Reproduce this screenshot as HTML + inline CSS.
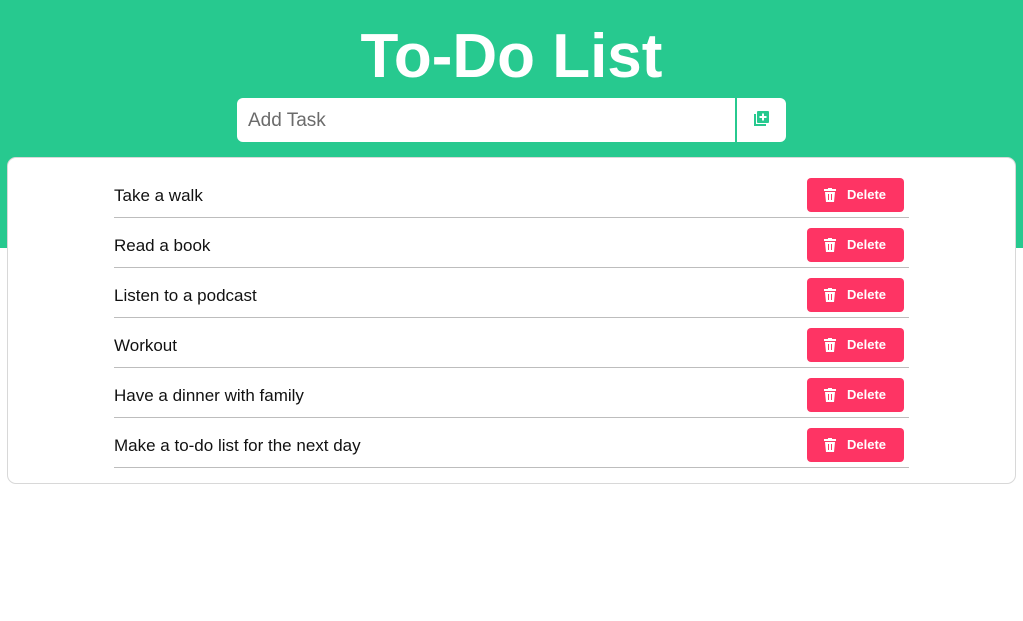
<!DOCTYPE html>
<html><head><style>
*{box-sizing:border-box;margin:0;padding:0}
body{width:1023px;height:621px;background:#fff;font-family:"Liberation Sans",sans-serif;position:relative;overflow:hidden}
.hdr{position:absolute;left:0;top:0;width:1023px;height:248px;background:#27c98f}
h1{position:absolute;top:22px;left:0;width:1023px;text-align:center;color:#fff;font-size:62px;font-weight:bold;line-height:70px;letter-spacing:0px}
.inp{position:absolute;left:237px;top:98px;width:498px;height:44px;background:#fff;border-radius:6px 0 0 6px;font-size:19px;color:#6b6b6b;padding:12px 11px}
.btn{position:absolute;left:737px;top:98px;width:49px;height:44px;background:#fff;border-radius:0 6px 6px 0}
.card{position:absolute;left:7px;top:157px;width:1009px;height:327px;background:#fff;border:1px solid #d8d8d8;border-radius:9px}
.row{position:absolute;left:106px;width:795px;height:50px;border-bottom:1px solid #bdbdbd}
.row span{position:absolute;left:0;top:18px;font-size:17px;color:#111}
.del{position:absolute;left:693px;top:10px;width:97px;height:34px;background:#fe3464;border-radius:4px;color:#fff;font-size:13px;font-weight:bold;padding:9px 0 0 40px}
.del svg{position:absolute;left:17px;top:10px}
</style></head><body>
<div class="hdr"></div>
<h1>To-Do List</h1>
<div class="inp">Add Task</div>
<div class="btn"><svg style="position:absolute;left:16px;top:12px" width="18" height="18" viewBox="0 0 18 18"><path d="M1 4v12h12v-2H3V4z" fill="#27c98f"/><rect x="4" y="1" width="12" height="12" rx="1" fill="#27c98f"/><path d="M10 3.5v7M6.5 7h7" stroke="#fff" stroke-width="2"/></svg></div>
<div class="card">
<div class="row" style="top:10px"><span>Take a walk</span><div class="del"><svg width="12" height="14" viewBox="0 0 12 14"><rect x="0" y="1" width="12" height="2" fill="#fff"/><rect x="4" y="0" width="4" height="2" fill="#fff"/><path d="M1 4h10l-1 10H2z" fill="#fff"/><path d="M4.5 6v6M7.5 6v6" stroke="#fe3464" stroke-width="1"/></svg>Delete</div></div>
<div class="row" style="top:60px"><span>Read a book</span><div class="del"><svg width="12" height="14" viewBox="0 0 12 14"><rect x="0" y="1" width="12" height="2" fill="#fff"/><rect x="4" y="0" width="4" height="2" fill="#fff"/><path d="M1 4h10l-1 10H2z" fill="#fff"/><path d="M4.5 6v6M7.5 6v6" stroke="#fe3464" stroke-width="1"/></svg>Delete</div></div>
<div class="row" style="top:110px"><span>Listen to a podcast</span><div class="del"><svg width="12" height="14" viewBox="0 0 12 14"><rect x="0" y="1" width="12" height="2" fill="#fff"/><rect x="4" y="0" width="4" height="2" fill="#fff"/><path d="M1 4h10l-1 10H2z" fill="#fff"/><path d="M4.5 6v6M7.5 6v6" stroke="#fe3464" stroke-width="1"/></svg>Delete</div></div>
<div class="row" style="top:160px"><span>Workout</span><div class="del"><svg width="12" height="14" viewBox="0 0 12 14"><rect x="0" y="1" width="12" height="2" fill="#fff"/><rect x="4" y="0" width="4" height="2" fill="#fff"/><path d="M1 4h10l-1 10H2z" fill="#fff"/><path d="M4.5 6v6M7.5 6v6" stroke="#fe3464" stroke-width="1"/></svg>Delete</div></div>
<div class="row" style="top:210px"><span>Have a dinner with family</span><div class="del"><svg width="12" height="14" viewBox="0 0 12 14"><rect x="0" y="1" width="12" height="2" fill="#fff"/><rect x="4" y="0" width="4" height="2" fill="#fff"/><path d="M1 4h10l-1 10H2z" fill="#fff"/><path d="M4.5 6v6M7.5 6v6" stroke="#fe3464" stroke-width="1"/></svg>Delete</div></div>
<div class="row" style="top:260px"><span>Make a to-do list for the next day</span><div class="del"><svg width="12" height="14" viewBox="0 0 12 14"><rect x="0" y="1" width="12" height="2" fill="#fff"/><rect x="4" y="0" width="4" height="2" fill="#fff"/><path d="M1 4h10l-1 10H2z" fill="#fff"/><path d="M4.5 6v6M7.5 6v6" stroke="#fe3464" stroke-width="1"/></svg>Delete</div></div>
</div>
</body></html>
